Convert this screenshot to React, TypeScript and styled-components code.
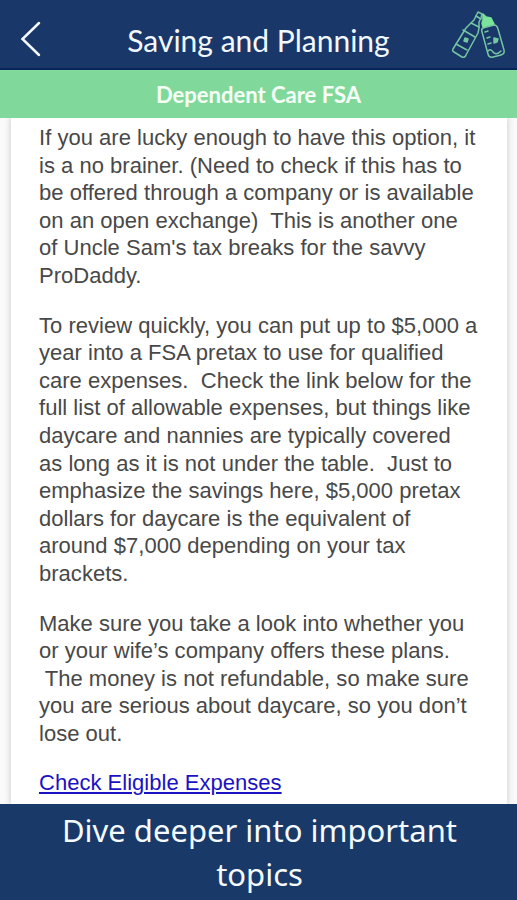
import React from "react";
import styled, { createGlobalStyle } from "styled-components";

const GlobalStyle = createGlobalStyle`
  html, body { margin: 0; padding: 0; overflow: hidden; background: #fff; }
  * { box-sizing: border-box; }
`;

const Screen = styled.div`
  width: 517px;
  height: 900px;
  display: flex;
  flex-direction: column;
  overflow: hidden;
  background: #fafafa;
`;

const Header = styled.header`
  flex: none;
  height: 70px;
  display: grid;
  grid-template-columns: 77px 1fr 77px;
  background: #193769;
  border-bottom: 2px solid #08245a;
`;

const BackButton = styled.button`
  padding: 20px 0 0 20px;
  border: 0;
  background: none;
  display: flex;
  align-items: flex-start;
`;

const Title = styled.h1`
  margin: 0;
  padding-top: 21px;
  text-align: center;
  white-space: nowrap;
  color: #f3f8ff;
  font: 400 30px/38px Lato, sans-serif;
`;

const Subheader = styled.div`
  flex: none;
  height: 48px;
  display: flex;
  align-items: center;
  justify-content: center;
  padding-top: 1px;
  background: #80d99a;
  color: #f5fff7;
  font: 700 22px/28px Lato, sans-serif;
`;

const Content = styled.main`
  flex: 1;
  min-height: 0;
  padding: 0 10px 0 11px;
  display: flex;
  overflow: hidden;
`;

const Card = styled.article`
  flex: 1;
  padding: 6px 0 0 28px;
  background: #fff;
  box-shadow: 0 0 6px 1px rgba(0, 0, 0, 0.16);
`;

const Paragraph = styled.p`
  margin: 0 0 22px;
  white-space: pre;
  color: #484848;
  font: 400 22px/27.6px "Liberation Sans", Arial, sans-serif;
  letter-spacing: 0.02px;
`;

const Link = styled.a`
  color: #1b12c4;
  text-decoration: underline;
  text-decoration-thickness: 1.5px;
  text-underline-offset: 2px;
`;

const Footer = styled.footer`
  flex: none;
  height: 96px;
  padding: 4px 0 0 2px;
  background: #193969;
  color: #f5faff;
  text-align: center;
  white-space: pre;
  font: 400 31px/44px "Noto Sans", "Open Sans", sans-serif;
`;

const paragraphs = [
  [
    "If you are lucky enough to have this option, it",
    "is a no brainer. (Need to check if this has to",
    "be offered through a company or is available",
    "on an open exchange)  This is another one",
    "of Uncle Sam's tax breaks for the savvy",
    "ProDaddy.",
  ],
  [
    "To review quickly, you can put up to $5,000 a",
    "year into a FSA pretax to use for qualified",
    "care expenses.  Check the link below for the",
    "full list of allowable expenses, but things like",
    "daycare and nannies are typically covered",
    "as long as it is not under the table.  Just to",
    "emphasize the savings here, $5,000 pretax",
    "dollars for daycare is the equivalent of",
    "around $7,000 depending on your tax",
    "brackets.",
  ],
  [
    "Make sure you take a look into whether you",
    "or your wife’s company offers these plans.",
    " The money is not refundable, so make sure",
    "you are serious about daycare, so you don’t",
    "lose out.",
  ],
];

const BottlesIcon = () => (
  <svg width="77" height="68" viewBox="0 0 77 68" fill="none" stroke="#76c5a2" strokeWidth="1.5" strokeLinejoin="round" strokeLinecap="round">
    <path d="M38 12l4 2-1 4-2 4 0 6-1 5-12 22q-1 3-4 2l-8-5q-2-1-1-3l13-21 5-5 3-3z" />
    <path d="M36 16l5 3M31 23l8 4M23 30l12 7M16 44l11 6" />
    <path d="M25 38l3 1-1 3-3-1z" fill="#76c5a2" />
    <path d="M43 14l3 3 5 1 3 6-11 3-1-4 1-3z" fill="#7be39b" stroke="#7be39b" />
    <path d="M43 28q-2 1-1 4l6 22q1 4 5 3l8-2q4-1 3-5l-6-21q-1-4-4-4z" />
    <path d="M45 32l3-1M47 38l3-1M48 44l3-1M48 51q2-3 5 1t8-1" />
    <path d="M54 38l4 1-1 3-3 1z" fill="#76c5a2" />
  </svg>
);

export default function App() {
  return (
    <>
      <GlobalStyle />
      <Screen>
        <Header>
          <BackButton aria-label="Back">
            <svg width="24" height="38" viewBox="0 0 24 38" fill="none" stroke="#f4f9ff" strokeWidth="2.5" strokeLinecap="round">
              <path d="M19 3L2.500 19l16.500 16" />
            </svg>
          </BackButton>
          <Title>Saving and Planning</Title>
          <BottlesIcon />
        </Header>
        <Subheader>Dependent Care FSA</Subheader>
        <Content>
          <Card>
            {paragraphs.map((lines) => (
              <Paragraph key={lines[0]}>{lines.join("\n")}</Paragraph>
            ))}
            <Paragraph>
              <Link>Check Eligible Expenses</Link>
            </Paragraph>
          </Card>
        </Content>
        <Footer>{"Dive deeper into important\ntopics"}</Footer>
      </Screen>
    </>
  );
}
